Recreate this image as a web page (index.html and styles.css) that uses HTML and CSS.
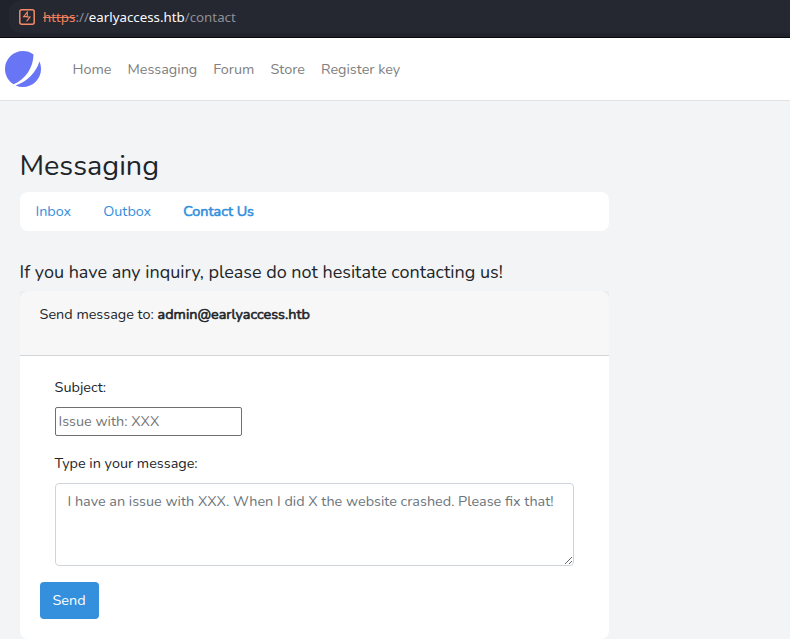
FILE: index.html
```html
<!DOCTYPE html>
<html lang="en">
<head>
<meta charset="utf-8">
<title>Messaging</title>
<link rel="stylesheet" href="styles.css">
</head>
<body>
<div class="browser">
  <div class="address">
    <svg class="lock" width="16" height="16" viewBox="0 0 16 16" fill="none" stroke="#f58b64"><rect x="0.8" y="0.8" width="14.4" height="14.4" rx="2" stroke-width="1.5"/><path d="M8.3 3.2 4.6 7.6H8.3ZM7.6 8H11L7.6 12.4" stroke-width="1.1"/></svg>
    <div class="url"><span class="scheme">https</span>://<span class="host">earlyaccess.htb</span>/contact</div>
  </div>
</div>
<nav class="navbar">
  <svg class="logo" width="36" height="36" viewBox="0 0 48 48" fill="#6875f5"><path d="M11.395 44.428C4.557 40.198 0 32.632 0 24 0 10.745 10.745 0 24 0a23.891 23.891 0 0113.997 4.502c-.2 17.907-11.097 33.245-26.602 39.926z"/><path d="M14.134 45.885A23.914 23.914 0 0024 48c13.255 0 24-10.745 24-24 0-3.516-.756-6.856-2.115-9.866-4.659 15.143-16.608 27.092-31.75 31.751z"/></svg>
  <a>Home</a><a>Messaging</a><a>Forum</a><a>Store</a><a>Register key</a>
</nav>
<main>
  <h1>Messaging</h1>
  <div class="tabs"><a>Inbox</a><a>Outbox</a><a class="strong">Contact Us</a></div>
  <h2>If you have any inquiry, please do not hesitate contacting us!</h2>
  <form class="card">
    <div class="card-header">Send message to: <span class="strong">admin@earlyaccess.htb</span></div>
    <div class="card-body">
      <label class="subject-label">Subject:</label>
      <input class="subject" type="text" placeholder="Issue with: XXX">
      <label class="message-label">Type in your message:</label>
      <textarea class="message" placeholder="I have an issue with XXX. When I did X the website crashed. Please fix that!"></textarea>
      <button type="button">Send</button>
    </div>
  </form>
</main>
</body>
</html>
```
FILE: styles.css
```css
* { box-sizing: border-box; }
body {
  margin: 0;
  height: 639px;
  overflow: hidden;
  background: #f2f4f6;
  color: #212529;
  font: 14.4px/22px Nunito, Lato, sans-serif;
}
.browser {
  height: 38px;
  padding-left: 9px;
  background: #20222c;
  border-bottom: 1px solid #08080c;
}
.address {
  display: flex;
  align-items: center;
  height: 33px;
  padding: 1px 0 0 10px;
  background: #252731;
  border-radius: 12px 0 0 12px;
}
.url {
  margin-left: 8px;
  color: #8f9097;
  font: 13.3px/20px "Noto Sans", sans-serif;
  white-space: nowrap;
}
.scheme { color: #f0805a; text-decoration: line-through; }
.host { color: #fbfbfe; }
.navbar {
  display: flex;
  align-items: center;
  gap: 16px;
  height: 63px;
  padding-left: 5px;
  background: #fff;
  border-bottom: 1px solid #dee2e6;
  color: #808080;
  white-space: nowrap;
}
.logo { margin-right: 15.5px; }
main { width: 609px; padding: 48px 0 0 20px; }
h1 {
  margin: 0 0 0 -0.6px;
  height: 43px;
  font-size: 28.8px;
  line-height: 34px;
  font-weight: 400;
}
.tabs {
  display: flex;
  height: 39px;
  padding: 0 0 1px 15.5px;
  gap: 32px;
  align-items: center;
  background: #fff;
  border-radius: 8px;
  color: #3490dc;
}
.strong { -webkit-text-stroke: 0.6px currentColor; }
h2 {
  margin: 29px 0 7px -0.5px;
  font-size: 18px;
  line-height: 24px;
  font-weight: 400;
  white-space: nowrap;
}
.card {
  height: 348px;
  background: linear-gradient(#ebecee 10px, #fff 10px);
  border-radius: 2px 2px 8px 8px;
  overflow: hidden;
}
.card-header {
  height: 65px;
  padding: 12px 19.6px;
  background: #f7f7f7;
  border-bottom: 1px solid #d4d5d6;
  border-radius: 8px 8px 0 0;
}
.card-body {
  display: flex;
  flex-direction: column;
  align-items: flex-start;
  padding: 20px 20px 0;
}
label { margin-left: 14.6px; }
input, textarea {
  margin: 9px 0 0 15px;
  font: inherit;
  background: #fff;
}
.subject {
  width: 187px;
  height: 29px;
  padding: 0 2.5px 2px;
  border: 1px solid #707070;
  border-radius: 2px;
}
.subject::placeholder { color: #757575; }
.message-label { margin-top: 16px; }
.message {
  width: 519px;
  height: 83px;
  padding: 6px 11.5px;
  border: 1px solid #ced4da;
  border-radius: 4px;
  resize: vertical;
}
.message::placeholder { color: #6c757d; }
button {
  width: 59px;
  height: 37px;
  margin-top: 16px;
  padding: 0 1px 1px 0;
  border: 0;
  border-radius: 4px;
  background: #3490dc;
  color: #fff;
  font: inherit;
}
```
